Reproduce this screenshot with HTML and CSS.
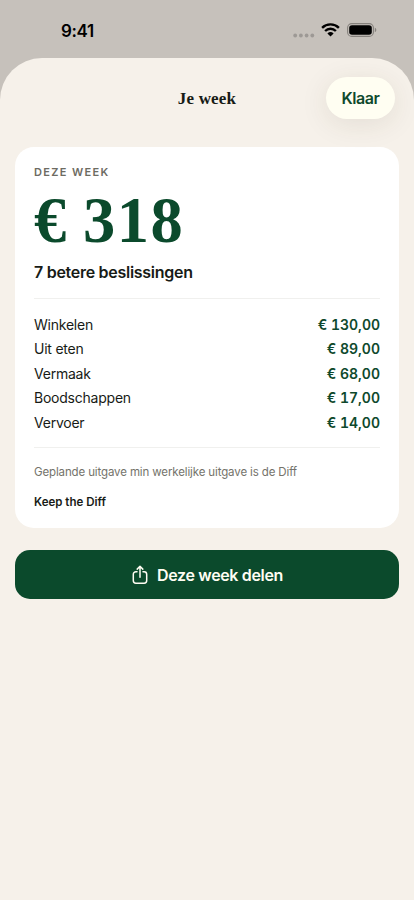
FILE: index.html
```html
<!DOCTYPE html>
<html lang="nl">
<head>
<meta charset="utf-8">
<meta name="viewport" content="width=device-width, initial-scale=1">
<title>Je week</title>
<link rel="stylesheet" href="styles.css">
</head>
<body>
<div class="status">
  <span class="time">9:41</span>
  <div class="indicators">
    <svg class="dots" width="22" height="5" viewBox="0 0 22 5"><circle cx="2.2" cy="2.5" r="1.9"/><circle cx="7.9" cy="2.5" r="1.9"/><circle cx="13.6" cy="2.5" r="1.9"/><circle cx="19.3" cy="2.5" r="1.9"/></svg>
    <svg class="wifi" width="19" height="14" viewBox="0 0 19 14"><g fill="none" stroke="#000" stroke-width="2.4"><path d="M1.1 4.8a12 12 0 0 1 16.8 0"/><path d="M4.1 8a7.7 7.7 0 0 1 10.8 0"/></g><path d="M6.4 10.5a4.5 4.5 0 0 1 6.2 0L9.5 13.6z"/></svg>
    <svg class="battery" width="30" height="14" viewBox="0 0 30 14"><rect x=".6" y=".6" width="25.8" height="12.8" rx="4.2" fill="none" stroke="#85817c" stroke-width="1.1"/><rect x="2.2" y="2.2" width="22.6" height="9.6" rx="2.8"/><path d="M27.8 4.8c2 .7 2 3.7 0 4.4z" fill="#85817c"/></svg>
  </div>
</div>
<main class="sheet">
  <header class="bar">
    <h1 class="title">Je week</h1>
    <button class="done">Klaar</button>
  </header>
  <section class="card">
    <p class="eyebrow">DEZE WEEK</p>
    <p class="total">€ 318</p>
    <p class="summary">7 betere beslissingen</p>
    <ul class="rows">
      <li><span>Winkelen</span><b>€ 130,00</b></li>
      <li><span>Uit eten</span><b>€ 89,00</b></li>
      <li><span>Vermaak</span><b>€ 68,00</b></li>
      <li><span>Boodschappen</span><b>€ 17,00</b></li>
      <li><span>Vervoer</span><b>€ 14,00</b></li>
    </ul>
    <p class="note">Geplande uitgave min werkelijke uitgave is de Diff</p>
    <p class="brand">Keep the Diff</p>
  </section>
  <button class="share">
    <svg width="16" height="20" viewBox="0 0 16 20" fill="none" stroke="#fffdf3" stroke-width="1.5" stroke-linecap="round" stroke-linejoin="round"><path d="M5 6.8H3.9A2.6 2.6 0 0 0 1.3 9.4v6.2a2.6 2.6 0 0 0 2.6 2.6h8.2a2.6 2.6 0 0 0 2.6-2.6V9.4a2.6 2.6 0 0 0-2.6-2.6H11M8 12.3V1.5M5.2 4.1 8 1.3l2.8 2.8"/></svg>
    <span>Deze week delen</span>
  </button>
</main>
</body>
</html>
```
FILE: styles.css
```css
* { box-sizing: border-box; }
body {
  margin: 0;
  height: 900px;
  overflow: hidden;
  background: #c6c1bb;
  color: #171b16;
  font-family: Inter, "Liberation Sans", sans-serif;
}
h1, p, ul { margin: 0; padding: 0; }
button { border: 0; padding: 0; font-family: inherit; }
.status {
  display: flex;
  justify-content: space-between;
  align-items: center;
  height: 58px;
  padding: 3px 37px 0 61px;
  color: #000;
}
.time { font-size: 17px; font-weight: 600; letter-spacing: -0.35px; }
.indicators { display: flex; align-items: center; margin-top: -1px; }
.dots { fill: #9d9995; margin: 10px 6px 0 0; }
.wifi { margin-right: 7px; }
.sheet {
  height: 842px;
  padding: 19px 15px 0;
  background: #f6f1ea;
  border-radius: 42px 42px 0 0;
  overflow: hidden;
}
.bar {
  display: grid;
  grid-template-columns: 1fr auto 1fr;
  align-items: center;
  height: 42px;
  margin-bottom: 28px;
  padding-right: 4px;
}
.title {
  grid-column: 2;
  padding: 1px 0 0 4px;
  font: 700 17px/24px "Liberation Serif", serif;
  letter-spacing: 0.2px;
}
.done {
  justify-self: end;
  width: 69px;
  height: 42px;
  border-radius: 21px;
  background: #fffef2;
  color: #0e492c;
  font-size: 16px;
  font-weight: 600;
  letter-spacing: -0.4px;
  box-shadow: 0 5px 28px rgba(70, 60, 30, .1);
}
.card {
  height: 381px;
  padding: 16px 19px 0;
  border-radius: 19px;
  background: #fff;
}
.eyebrow {
  color: #6d6b62;
  font-size: 11px;
  line-height: 18px;
  font-weight: 600;
  letter-spacing: 1.35px;
}
.total {
  height: 73px;
  color: #0b4a2c;
  font: 700 64.5px/79px "Liberation Serif", serif;
  letter-spacing: 1.5px;
  word-spacing: -2.5px;
}
.summary {
  height: 44px;
  font-size: 16px;
  line-height: 37px;
  font-weight: 600;
  letter-spacing: -0.28px;
}
.rows {
  height: 150px;
  padding-top: 13.5px;
  border: solid #f0f0ee;
  border-width: 1px 0;
  list-style: none;
}
.rows li {
  display: flex;
  justify-content: space-between;
  font-size: 14px;
  line-height: 24.5px;
  letter-spacing: -0.23px;
}
.rows b {
  color: #0e492c;
  font-weight: 600;
  font-variant-numeric: tabular-nums;
  letter-spacing: 0;
}
.note {
  margin-top: 14px;
  color: #74736b;
  font-size: 11.5px;
  line-height: 20px;
  letter-spacing: -0.13px;
}
.brand {
  margin-top: 10px;
  font-size: 11.5px;
  line-height: 20px;
  font-weight: 600;
}
.share {
  display: flex;
  justify-content: center;
  align-items: center;
  gap: 9px;
  width: 100%;
  height: 49px;
  margin-top: 22px;
  padding: 1px 0 0 1px;
  border-radius: 15px;
  background: #0b4a2c;
  color: #fffdf3;
  font-size: 16px;
  font-weight: 600;
  letter-spacing: -0.35px;
}
```
